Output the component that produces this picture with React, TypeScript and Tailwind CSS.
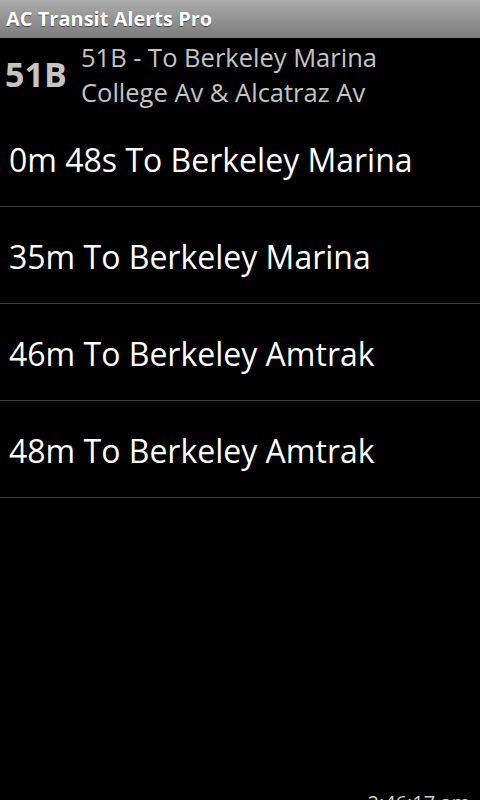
import React from 'react';

const arrivals = [
  '0m 48s To Berkeley Marina',
  '35m To Berkeley Marina',
  '46m To Berkeley Amtrak',
  '48m To Berkeley Amtrak',
];

const App: React.FC = () => {
  return (
    <div
      className="h-[800px] w-[480px] overflow-hidden bg-black flex flex-col"
      style={{ fontFamily: '"Open Sans", "Noto Sans", sans-serif' }}
    >
      <header className="h-[38px] shrink-0 bg-gradient-to-b from-[#acacac] to-[#7c7c7c] flex items-center px-[6px]">
        <h1 className="text-[20px] font-bold text-white [text-shadow:0_1px_1px_rgba(0,0,0,0.5)]">
          AC Transit Alerts Pro
        </h1>
      </header>

      <div className="flex items-center h-[72px] shrink-0">
        <div className="w-[81px] pl-[5px] text-[34px] font-bold text-[#c4c4c4] leading-none">51B</div>
        <div className="flex flex-col pt-[2px] text-[25.5px] leading-[35px] text-[#c4c4c4]">
          <span>51B - To Berkeley Marina</span>
          <span>College Av &amp; Alcatraz Av</span>
        </div>
      </div>

      <ul className="flex-1">
        {arrivals.map((a) => (
          <li
            key={a}
            className="h-[97px] border-b border-[#3a3a3a] flex items-center pt-[3px] pl-[9px] text-[32px] text-white"
          >
            {a}
          </li>
        ))}
      </ul>

      <footer className="h-[7px] shrink-0 flex justify-end pr-[10px]">
        <span className="text-[20px] leading-none text-[#d0d0d0]">2:46:17 am</span>
      </footer>
    </div>
  );
};

export default App;
